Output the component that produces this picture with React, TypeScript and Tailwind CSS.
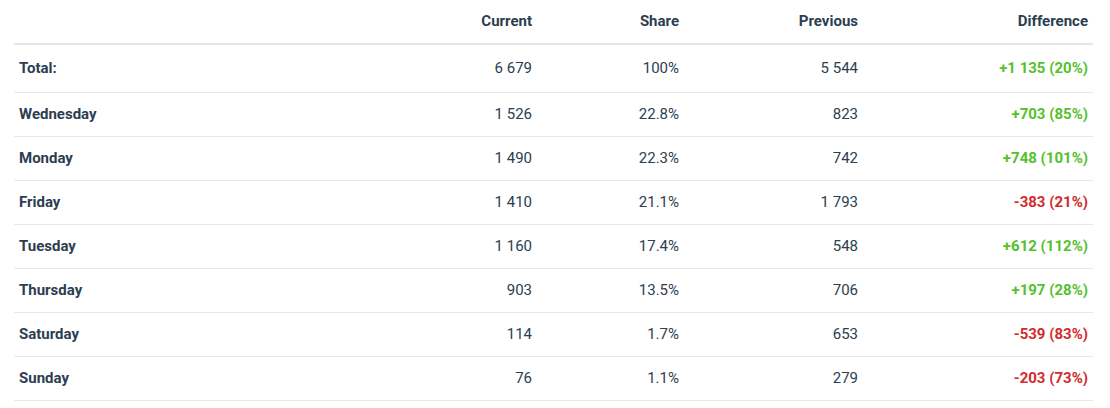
const rows = [
  { day: "Wednesday", current: "1 526", share: "22.8%", previous: "823", diff: "+703 (85%)", up: true },
  { day: "Monday", current: "1 490", share: "22.3%", previous: "742", diff: "+748 (101%)", up: true },
  { day: "Friday", current: "1 410", share: "21.1%", previous: "1 793", diff: "-383 (21%)", up: false },
  { day: "Tuesday", current: "1 160", share: "17.4%", previous: "548", diff: "+612 (112%)", up: true },
  { day: "Thursday", current: "903", share: "13.5%", previous: "706", diff: "+197 (28%)", up: true },
  { day: "Saturday", current: "114", share: "1.7%", previous: "653", diff: "-539 (83%)", up: false },
  { day: "Sunday", current: "76", share: "1.1%", previous: "279", diff: "-203 (73%)", up: false },
];

const cols = "grid grid-cols-[376px_147px_147px_179px_230px] items-center";

export default function App() {
  return (
    <div
      className="min-h-screen bg-white pl-[14px] pr-[17px] text-[15px] text-[#2c3e50]"
      style={{ fontFamily: "Roboto, 'Liberation Sans', sans-serif" }}
    >
      <div className={`${cols} h-[45px] border-b-2 border-[#e6e6e6] font-bold`}>
        <div />
        <div className="px-[5px] text-right">Current</div>
        <div className="px-[5px] text-right">Share</div>
        <div className="px-[5px] text-right">Previous</div>
        <div className="px-[5px] text-right">Difference</div>
      </div>

      <div className={`${cols} h-[48px] border-b border-[#e8e8e8]`}>
        <div className="px-[5px] font-bold">Total:</div>
        <div className="px-[5px] text-right">6 679</div>
        <div className="px-[5px] text-right">100%</div>
        <div className="px-[5px] text-right">5 544</div>
        <div className="px-[5px] text-right font-bold text-[#55c02c]">+1 135 (20%)</div>
      </div>

      {rows.map((r) => (
        <div key={r.day} className={`${cols} h-[44px] border-b border-[#e8e8e8]`}>
          <div className="px-[5px] font-bold">{r.day}</div>
          <div className="px-[5px] text-right">{r.current}</div>
          <div className="px-[5px] text-right">{r.share}</div>
          <div className="px-[5px] text-right">{r.previous}</div>
          <div
            className={`px-[5px] text-right font-bold ${r.up ? "text-[#55c02c]" : "text-[#d12b2b]"}`}
          >
            {r.diff}
          </div>
        </div>
      ))}
    </div>
  );
}
